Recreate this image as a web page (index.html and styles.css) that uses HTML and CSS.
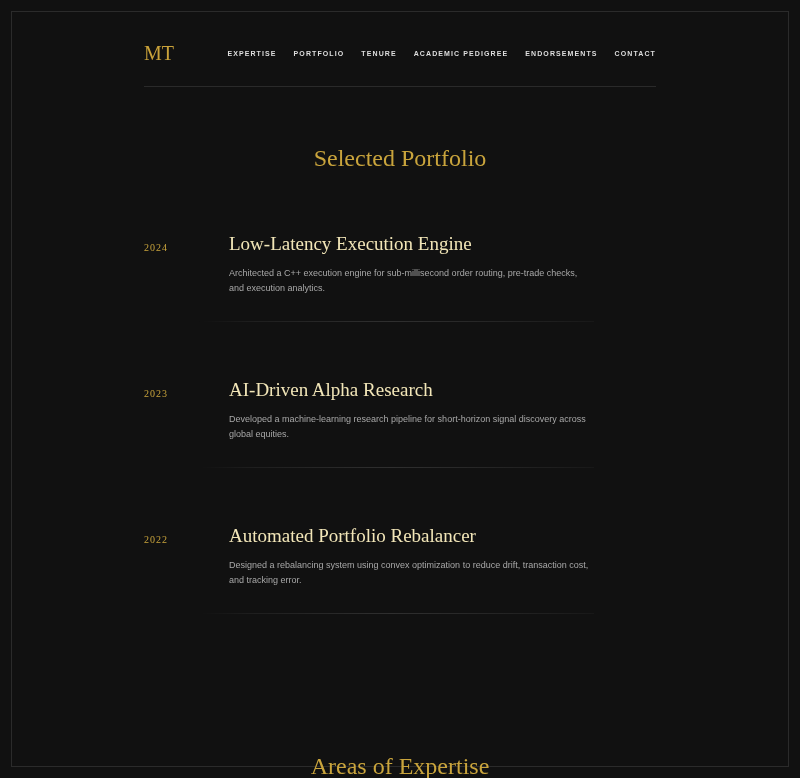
FILE: index.html
```
<!DOCTYPE html>
<html lang="en">
<head>
<meta charset="utf-8">
<title>MT — Portfolio</title>
<link rel="stylesheet" href="styles.css">
</head>
<body>
<div class="frame"></div>
<div class="page">
  <header class="header">
    <div class="logo">MT</div>
    <nav class="nav">
      <a href="#expertise">Expertise</a>
      <a href="#portfolio">Portfolio</a>
      <a href="#tenure">Tenure</a>
      <a href="#pedigree">Academic Pedigree</a>
      <a href="#endorsements">Endorsements</a>
      <a href="#contact">Contact</a>
    </nav>
  </header>

  <section class="section" id="portfolio">
    <h2 class="section-title">Selected Portfolio</h2>
    <div class="items">
      <article class="item">
        <div class="year">2024</div>
        <div class="body">
          <h3 class="item-title">Low-Latency Execution Engine</h3>
          <p class="desc">Architected a C++ execution engine for sub-millisecond order routing, pre-trade checks, and execution analytics.</p>
        </div>
      </article>
      <article class="item">
        <div class="year">2023</div>
        <div class="body">
          <h3 class="item-title">AI-Driven Alpha Research</h3>
          <p class="desc">Developed a machine-learning research pipeline for short-horizon signal discovery across global equities.</p>
        </div>
      </article>
      <article class="item">
        <div class="year">2022</div>
        <div class="body">
          <h3 class="item-title">Automated Portfolio Rebalancer</h3>
          <p class="desc">Designed a rebalancing system using convex optimization to reduce drift, transaction cost, and tracking error.</p>
        </div>
      </article>
    </div>
  </section>

  <section class="section next" id="expertise">
    <h2 class="section-title">Areas of Expertise</h2>
  </section>
</div>
</body>
</html>
```
FILE: styles.css
```
html {
  background: #111111;
}
body {
  margin: 0;
  padding: 0;
  font-family: "Liberation Sans", Arial, sans-serif;
  color: #a8a8a8;
}
.frame {
  position: fixed;
  top: 11px;
  left: 11px;
  right: 11px;
  bottom: 11px;
  border: 1px solid #2b2b2b;
  pointer-events: none;
  z-index: -1;
}
.page {
  width: 512px;
  margin: 0 auto;
}
.header {
  display: flex;
  align-items: center;
  justify-content: space-between;
  padding: 41px 0 21px;
  border-bottom: 1px solid #2a2a2a;
}
.logo {
  font-family: "Liberation Serif", "Times New Roman", serif;
  font-size: 20px;
  line-height: 24px;
  color: #c9a23a;
}
.nav {
  display: flex;
  gap: 17px;
}
.nav a {
  font-size: 7px;
  font-weight: 700;
  letter-spacing: 1.1px;
  text-transform: uppercase;
  color: #dedede;
  text-decoration: none;
}
.section {
  padding-top: 57px;
}
.section-title {
  margin: 0;
  text-align: center;
  font-family: "Liberation Serif", "Times New Roman", serif;
  font-weight: 400;
  font-size: 24px;
  line-height: 28px;
  color: #c9a43c;
}
.items {
  display: flex;
  flex-direction: column;
  gap: 56px;
  margin-top: 60px;
}
.item {
  display: grid;
  grid-template-columns: 85px 1fr;
  width: 450px;
  padding-bottom: 25px;
  border-bottom: 1px solid transparent;
  border-image: linear-gradient(90deg, rgba(255,255,255,0) 12%, rgba(255,255,255,0.06) 25%, rgba(255,255,255,0.13) 55%, rgba(255,255,255,0.07) 85%, rgba(255,255,255,0.03) 100%) 1;
}
.year {
  font-family: "Liberation Serif", "Times New Roman", serif;
  font-size: 10px;
  letter-spacing: 1px;
  color: #c9a43c;
  padding-top: 10px;
}
.item-title {
  margin: 0 0 10px;
  font-family: "Liberation Serif", "Times New Roman", serif;
  font-weight: 400;
  font-size: 19px;
  line-height: 24px;
  color: #f2e6b8;
}
.desc {
  margin: 0;
  font-size: 9px;
  line-height: 15px;
  color: #a8a8a8;
}
.next {
  padding-top: 138px;
}
```
